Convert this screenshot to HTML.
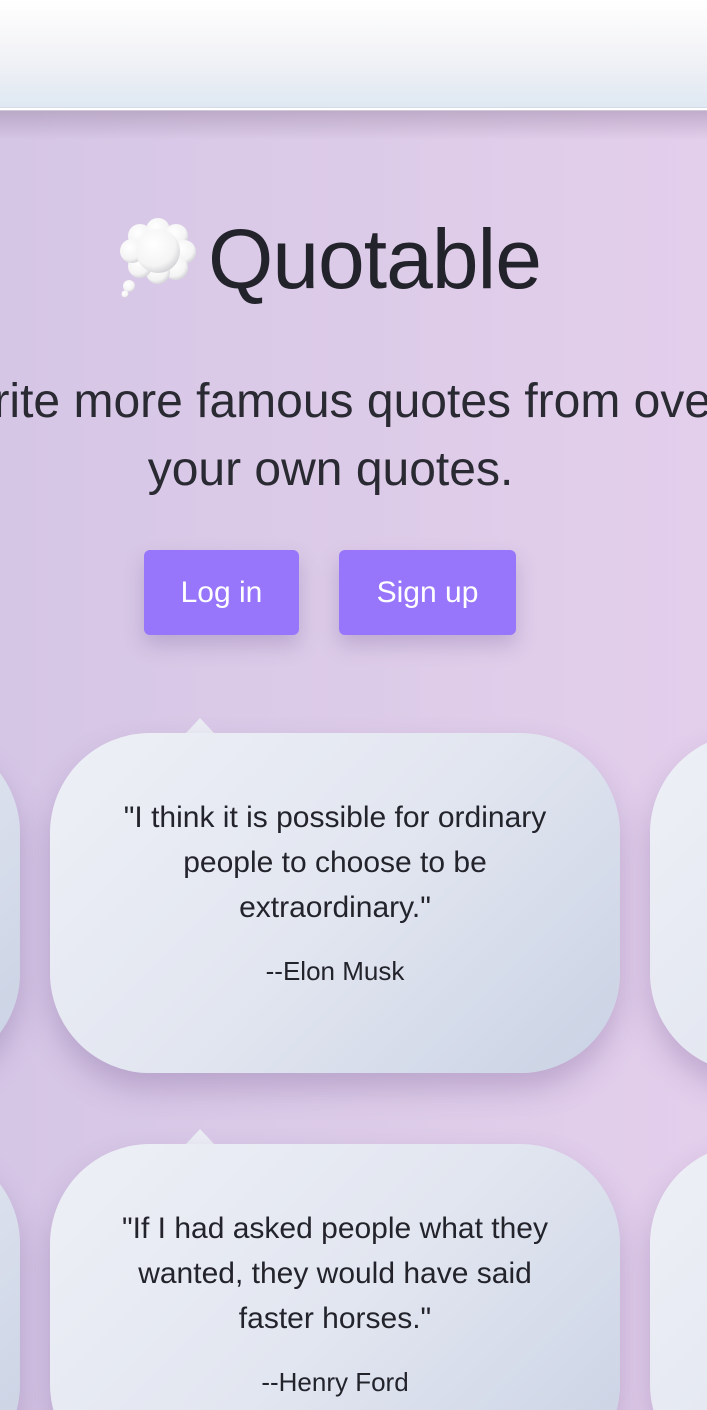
<!DOCTYPE html>
<html><head><meta charset="utf-8">
<style>
*{margin:0;padding:0;box-sizing:border-box}
html,body{width:707px;height:1410px;overflow:hidden}
body{font-family:"Liberation Sans",Helvetica,Arial,sans-serif;background:linear-gradient(90deg,#d6c6e6 0%,#dccbe8 50%,#e3cfec 100%);position:relative;color:#23232b}
.hdr{position:absolute;left:0;top:0;width:707px;height:108px;background:linear-gradient(180deg,#ffffff 0%,#f1f2f6 55%,#dfe8f2 100%);border-bottom:1px solid #d6dbe6}
.hdr:after{content:"";position:absolute;left:0;right:0;top:108px;height:3px;background:#fff}
.shade{position:absolute;left:0;right:0;top:110px;height:30px;background:linear-gradient(180deg,rgba(150,130,160,.45),rgba(150,130,160,0))}
.title{position:absolute;left:208px;top:212px;font-size:84px;line-height:94px;color:#23232b;letter-spacing:-1px;white-space:nowrap}
.sub{position:absolute;font-size:48px;line-height:68px;color:#2a2a33;white-space:nowrap}
.btn{position:absolute;top:550px;height:85px;background:#9876fb;color:#fff;border-radius:6px;font-size:30px;display:flex;align-items:center;justify-content:center;box-shadow:0 10px 20px rgba(100,70,140,.25)}
.card{position:absolute;background:linear-gradient(135deg,#eef0f6 0%,#e2e6f0 50%,#c9d2e4 100%);border-radius:100px;box-shadow:0 16px 30px rgba(110,80,140,.3);text-align:center}
.tail{position:absolute;width:0;height:0;border-left:15px solid transparent;border-right:15px solid transparent;border-bottom:16px solid #ebedf4}
.q{font-size:30px;line-height:45px;color:#23232b}
.a{font-size:26px;margin-top:26px;color:#23232b}
</style></head><body>
<div class="hdr"></div>
<div class="shade"></div>
<svg style="position:absolute;left:118px;top:216px" width="82" height="82" viewBox="0 0 82 82">
<defs><radialGradient id="g" cx="40%" cy="35%" r="70%"><stop offset="0" stop-color="#fff"/><stop offset=".7" stop-color="#f4f4f4"/><stop offset="1" stop-color="#cfcfd4"/></radialGradient></defs>
<g fill="url(#g)">
<circle cx="22" cy="20" r="12"/><circle cx="40" cy="14" r="12"/><circle cx="58" cy="20" r="12"/>
<circle cx="66" cy="36" r="12"/><circle cx="58" cy="52" r="12"/><circle cx="40" cy="56" r="12"/>
<circle cx="22" cy="50" r="12"/><circle cx="14" cy="35" r="12"/><circle cx="40" cy="35" r="22"/>
<circle cx="11" cy="70" r="6"/><circle cx="7" cy="78" r="3.5"/></g></svg>
<div class="title">Quotable</div>
<div class="sub" style="left:-51px;top:368px">Write more famous quotes from over 1,000 authors</div>
<div class="sub" style="left:-23px;width:707px;text-align:center;top:436px">your own quotes.</div>
<div class="btn" style="left:144px;width:155px">Log in</div>
<div class="btn" style="left:339px;width:177px">Sign up</div>

<div class="card" style="left:-550px;top:733px;width:570px;height:340px"></div>
<div class="card" style="left:650px;top:733px;width:570px;height:340px"></div>
<div class="tail" style="left:185px;top:718px"></div>
<div class="card" style="left:50px;top:733px;width:570px;height:340px;padding-top:62px">
<div class="q">"I think it is possible for ordinary<br>people to choose to be<br>extraordinary."</div>
<div class="a">--Elon Musk</div></div>

<div class="card" style="left:-550px;top:1144px;width:570px;height:340px"></div>
<div class="card" style="left:650px;top:1144px;width:570px;height:340px"></div>
<div class="tail" style="left:185px;top:1129px"></div>
<div class="card" style="left:50px;top:1144px;width:570px;height:340px;padding-top:62px">
<div class="q">"If I had asked people what they<br>wanted, they would have said<br>faster horses."</div>
<div class="a">--Henry Ford</div></div>
</body></html>
